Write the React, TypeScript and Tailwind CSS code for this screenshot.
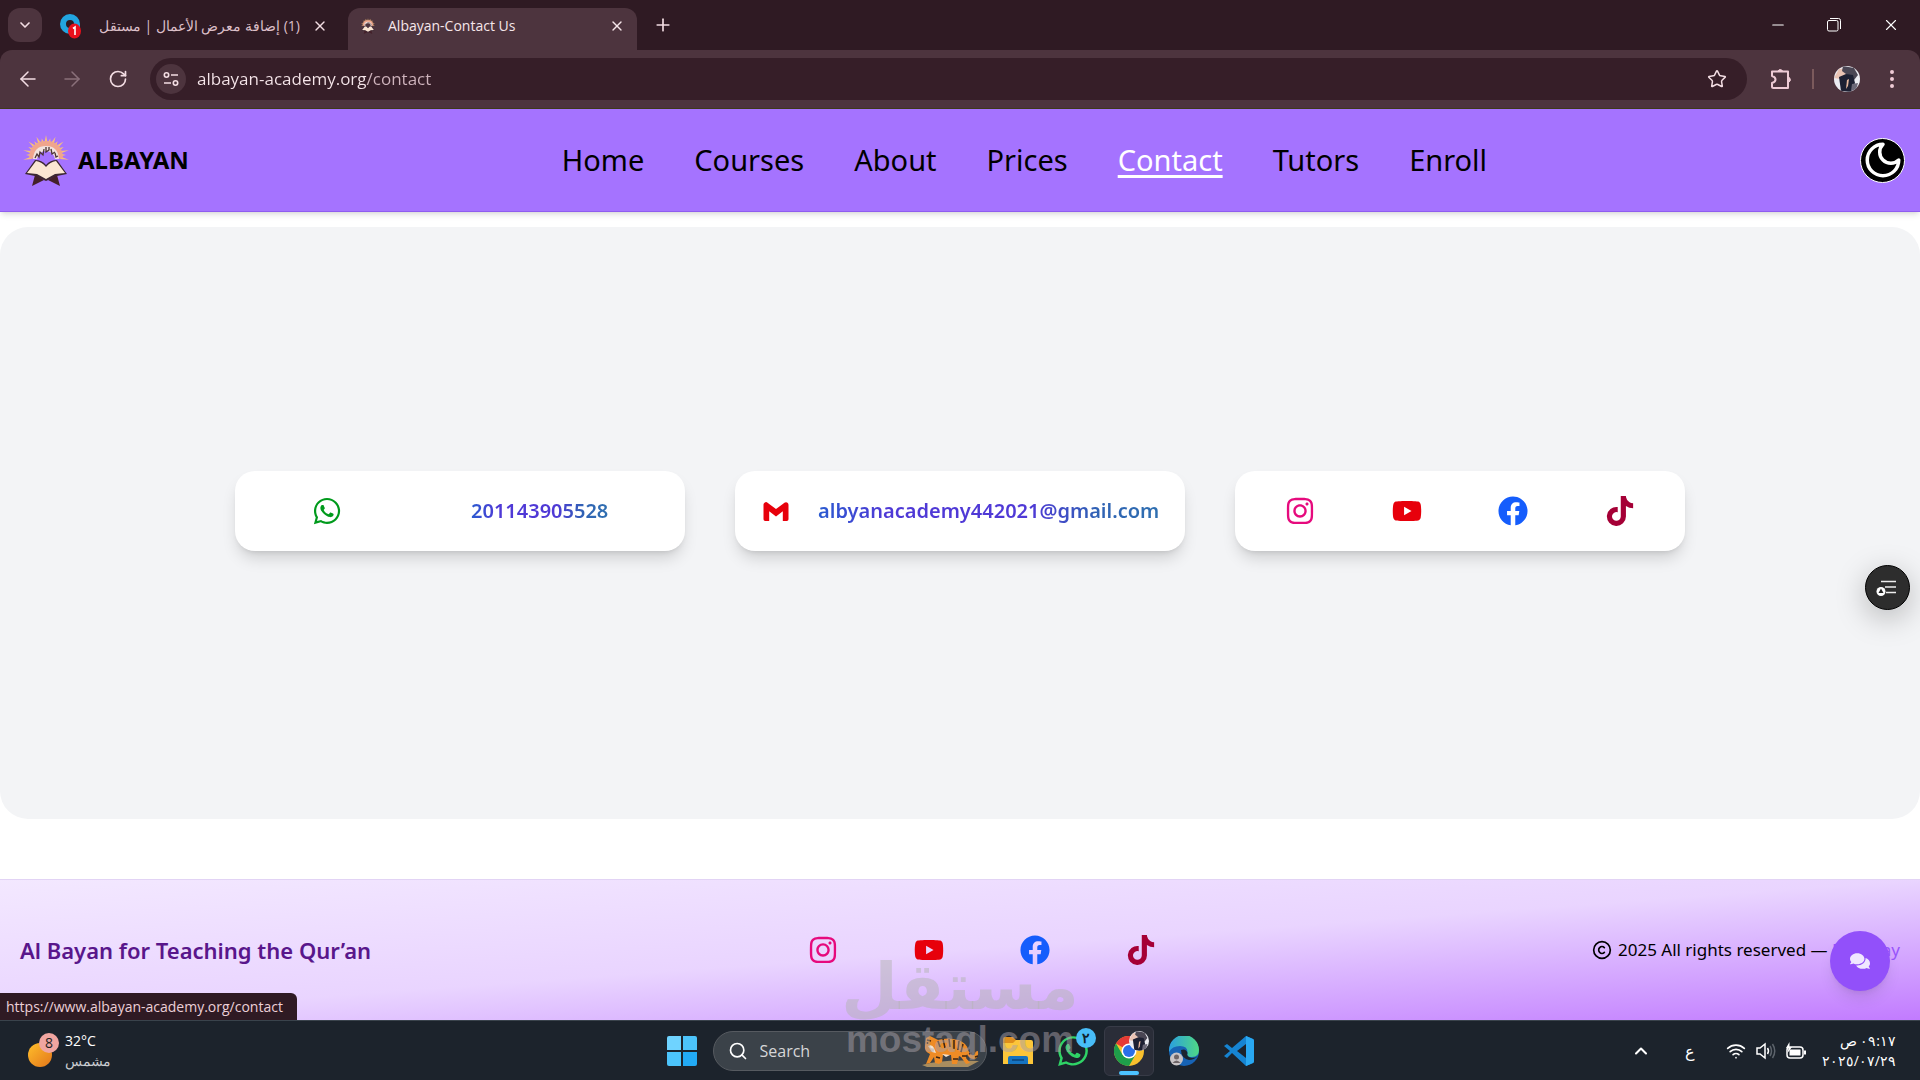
import type { ReactNode } from 'react';
import { FaComments, FaFacebook, FaInstagram, FaTiktok, FaWhatsapp, FaYoutube } from 'react-icons/fa';
import { BiLogoGmail } from 'react-icons/bi';
import { ArrowLeft, ArrowRight, ChevronDown, ChevronUp, Copyright, EllipsisVertical, Minus, Plus, RotateCw, Search, Star, Wifi, X } from 'lucide-react';

const rayPath = [-104, -90, -76, -62, -48, -36, -24, -12, 0, 12, 24, 36, 48, 62, 76, 90, 104]
  .map((deg, i) => {
    const at = (d: number, rx: number, ry: number) => {
      const r = (d * Math.PI) / 180;
      return `${(24 + rx * Math.sin(r)).toFixed(1)} ${(21 - ry * Math.cos(r)).toFixed(1)}`;
    };
    const long = i % 2 === 0;
    return `M${at(deg - 6, 15, 12)} L${at(deg, long ? 23.5 : 20, long ? 20 : 17)} L${at(deg + 6, 15, 12)} Z`;
  })
  .join(' ');

function Logo({ className }: { className: string }) {
  return (
    <svg viewBox="0 0 48 52" className={className} aria-hidden="true">
      <path d={rayPath} fill="#f6c07c" />
      <path d="M7 24 Q8 7 24 7 Q40 7 41 24 L35 25 Q34 14 24 14 Q14 14 13 25 Z" fill="#f0a58c" />
      <path d="M11 25 Q12 12 24 12 Q36 12 37 25 L33 25 Q31 17 24 17 Q17 17 15 25 Z" fill="#f1e2de" />
      <path d="M13 24 l2 -4 l2 3 l1 -5 l3 3 l1 -6 M24 13 v5 l3 -2 v-3 M29 15 l1 5 l3 -2 M33 19 l1 4 l2 -1" fill="none" stroke="#4b3434" strokeWidth="1.300" />
      <path d="M3 40 L13 26 Q20 26 24 31 Q28 26 35 26 L45 40 L35 42 L24 47 L13 42 Z" fill="#3c2733" />
      <path d="M5 39 L14 27 Q20 28 24 33 Q28 28 34 27 L43 39 L33 40 L24 45 L15 40 Z" fill="#fbe6d3" />
      <path d="M13 41 L22 46 L10 52 Z M35 41 L26 46 L38 52 Z" fill="#432029" />
    </svg>
  );
}

function MoonIcon() {
  return (
    <svg viewBox="0 0 24 24" className="size-[42px]" fill="none" stroke="currentColor" strokeWidth="2" strokeLinecap="round" strokeLinejoin="round" aria-hidden="true">
      <path d="M12 3a6 6 0 0 0 9 9 9 9 0 1 1-9-9Z" />
    </svg>
  );
}

function Avatar({ className }: { className: string }) {
  return (
    <svg viewBox="0 0 26 26" className={className} aria-hidden="true">
      <clipPath id="avatar-clip"><circle cx="13" cy="13" r="13" /></clipPath>
      <g clipPath="url(#avatar-clip)">
        <rect width="26" height="26" fill="#ececf2" />
        <path d="M0 12 L5 3 L14 2 L13 9 L6 13 Z" fill="#e9c3b4" />
        <path d="M9 0 L20 2 L24 9 L20 14 L12 8 L8 5 Z" fill="#4a4654" />
        <path d="M5 11 L12 8 L19 9 L21 17 L17 26 L7 25 Z" fill="#1d2033" />
        <path d="M13 14 L15 13 L14 20 L12 23 Z" fill="#e8b9a0" />
        <path d="M18 18 L24 17 L22 24 L17 25 Z" fill="#6b6878" />
      </g>
    </svg>
  );
}

function BrowserTop() {
  return (
    <div className="bg-[#2f1a23] font-['Open_Sans','Noto_Sans',sans-serif] text-[#f3dde3]">
      <div className="flex h-[50px] items-end pl-2">
        <button aria-label="Search tabs" className="mb-2 flex size-[34px] items-center justify-center rounded-xl bg-[#4d343e]">
          <ChevronDown className="size-4" strokeWidth={2.5} />
        </button>
        <div className="flex h-[42px] w-[306px] items-center gap-3 pr-5 pb-1.5 pl-[18px]">
          <svg viewBox="0 0 22 28" className="h-7 w-[22px] shrink-0" aria-hidden="true">
            <circle cx="10" cy="12" r="7" fill="none" stroke="#22a5e0" strokeWidth="6" />
            <path d="M10 21 L20 21 L20 12 Z" fill="#22a5e0" />
            <ellipse cx="14.500" cy="19" rx="6.500" ry="7.500" fill="#e8101c" />
            <path d="M13 16.500 L15 15 V23" fill="none" stroke="#fff" strokeWidth="1.600" />
          </svg>
          <span dir="rtl" className="flex-1 overflow-hidden text-sm whitespace-nowrap text-[#dcbfc8]">(1) إضافة معرض الأعمال | مستقل</span>
          <button aria-label="Close tab"><X className="size-4" /></button>
        </div>
        <div className="flex h-[42px] w-[289px] items-center gap-3 rounded-t-xl bg-[#4d343e] px-3 pb-1.5 text-[#f6e6ea]">
          <Logo className="h-4 w-4" />
          <span className="flex-1 text-sm whitespace-nowrap">Albayan-Contact Us</span>
          <button aria-label="Close tab"><X className="size-4" /></button>
        </div>
        <button aria-label="New tab" className="mb-[15px] ml-4"><Plus className="size-5" /></button>
        <div className="ml-auto flex h-[50px] items-center text-white">
          <button aria-label="Minimize" className="flex w-14 justify-center"><Minus className="size-[18px]" strokeWidth={1.5} /></button>
          <button aria-label="Restore" className="flex w-14 justify-center">
            <svg viewBox="0 0 14 14" className="size-3.5" fill="none" stroke="currentColor" aria-hidden="true"><rect x="0.500" y="2.500" width="10.500" height="10.500" rx="1.500" /><path d="M3 0.500 H11.500 Q13.500 0.500 13.500 2.500 V11" /></svg>
          </button>
          <button aria-label="Close" className="flex w-[58px] justify-center"><X className="size-[18px]" strokeWidth={1.5} /></button>
        </div>
      </div>
      <div className="flex h-[59px] items-center rounded-t-xl border-b border-[#3f3a1c] bg-[#4d343e] px-4">
        <button aria-label="Back" className="mr-5"><ArrowLeft className="size-6" strokeWidth={1.5} /></button>
        <button aria-label="Forward" className="mr-6 text-[#8a707a]"><ArrowRight className="size-6" strokeWidth={1.5} /></button>
        <button aria-label="Reload" className="mr-[22px]"><RotateCw className="size-5" strokeWidth={2} /></button>
        <div className="flex h-[42px] flex-1 items-center rounded-full bg-[#361e28] pr-5 pl-1.5">
          <button aria-label="Site information" className="mr-[11px] flex size-[30px] items-center justify-center rounded-full bg-[#4d343e]">
            <svg viewBox="0 0 16 16" className="size-4" fill="none" stroke="currentColor" strokeWidth="1.600" aria-hidden="true"><circle cx="3.500" cy="4" r="2.200" /><path d="M8 4 H15 M1 12 H8" /><circle cx="12.500" cy="12" r="2.200" /></svg>
          </button>
          <input aria-label="Address" defaultValue="albayan-academy.org/contact" className="flex-1 bg-[linear-gradient(90deg,#f6e6ea_170px,#cfb4bd_170px)] bg-clip-text text-[17px] text-transparent outline-none" />
          <button aria-label="Bookmark"><Star className="size-5" strokeWidth={1.8} /></button>
        </div>
        <button aria-label="Extensions" className="ml-[23px] text-[#efcbd5]">
          <svg viewBox="0 0 22 22" className="size-[22px]" fill="none" stroke="currentColor" strokeWidth="2" strokeLinejoin="round" aria-hidden="true"><path d="M2 3.500 H18 V20 H3.500 Q2 20 2 18.500 V15 Q5.500 14 5.500 11.500 Q5.500 9 2 8 Z" /><path d="M8 3 A2.500 2.500 0 0 1 12.500 3 Z M19 9.500 A2.500 2.500 0 0 1 19 14 Z" fill="currentColor" strokeWidth="1" /></svg>
        </button>
        <span className="mx-5 h-5 w-0.5 bg-[#7b5a5c]" />
        <Avatar className="size-[26px]" />
        <button aria-label="Menu" className="ml-5 text-[#efcbd5]"><EllipsisVertical className="size-6" /></button>
      </div>
    </div>
  );
}

const navItems = ['Home', 'Courses', 'About', 'Prices', 'Contact', 'Tutors', 'Enroll'];

function SiteHeader() {
  return (
    <header className="relative flex h-[103px] items-center justify-between border-b border-[#8f5cf0] bg-[#a573ff] pr-[15px] pl-[22px] shadow-md">
      <a href="#home" className="flex items-center gap-2">
        <Logo className="h-[52px] w-12" />
        <span className="text-2xl font-bold text-black">ALBAYAN</span>
      </a>
      <nav className="flex gap-[50px] text-[29px] text-black">
        {navItems.map((item) => (
          <a key={item} href={`#${item.toLowerCase()}`} className={item === 'Contact' ? 'text-white underline decoration-3 underline-offset-4' : ''}>{item}</a>
        ))}
      </nav>
      <button aria-label="Dark mode" className="flex size-[45px] items-center justify-center rounded-full border border-white bg-black text-white"><MoonIcon /></button>
    </header>
  );
}

function Card({ children }: { children: ReactNode }) {
  return (
    <div className="flex h-20 flex-1 items-center justify-around rounded-[20px] bg-white px-3 shadow-[0_10px_16px_-3px_rgba(0,0,0,0.15),0_4px_6px_-4px_rgba(0,0,0,0.15)]">{children}</div>
  );
}

function SocialLinks() {
  return (
    <>
      <a href="#instagram" aria-label="Instagram"><FaInstagram className="size-[30px] text-[#e60a7d]" /></a>
      <a href="#youtube" aria-label="YouTube"><FaYoutube className="size-[30px] text-[#e7000b]" /></a>
      <a href="#facebook" aria-label="Facebook"><FaFacebook className="size-[30px] text-[#155dfc]" /></a>
      <a href="#tiktok" aria-label="TikTok"><FaTiktok className="size-[30px] text-[#a50036]" /></a>
    </>
  );
}

const contactText = 'bg-[linear-gradient(90deg,#2a5bd0_0%,#4f39d6_20%,#4f39d6_62%,#2f62b4_82%,#2f6fb0_100%)] bg-clip-text text-xl font-semibold text-transparent';

function SiteMain() {
  return (
    <main className="flex flex-1 flex-col bg-white pt-[15px] pb-[60px]">
      <section className="relative flex flex-1 items-center justify-center rounded-[28px] bg-[#f3f4f6] px-[235px] pb-6">
        <div className="flex flex-1 gap-[50px]">
          <Card>
            <FaWhatsapp className="size-[30px] text-[#009a1c]" />
            <a href="tel:201143905528" className={contactText}>201143905528</a>
          </Card>
          <Card>
            <BiLogoGmail className="size-[30px] text-[#e7000b]" />
            <a href="mailto:albyanacademy442021@gmail.com" className={contactText}>albyanacademy442021@gmail.com</a>
          </Card>
          <Card><SocialLinks /></Card>
        </div>
        <button aria-label="Reading list" className="absolute top-[338px] right-2.5 flex size-[45px] items-center justify-center rounded-full border border-black bg-[#2d2d2d] shadow-[0_8px_30px_rgba(0,0,0,0.25)]">
          <svg viewBox="0 0 22 18" className="mr-1 h-[18px] w-[22px]" aria-hidden="true"><path d="M6 2.500 H21 M10 8 H21 M11 13.500 H21" stroke="#eee" strokeWidth="1.600" /><circle cx="6" cy="12.500" r="4.500" fill="#fff" /><path d="M6 9.500 L8.500 14 H3.500 Z" fill="#222" /></svg>
        </button>
      </section>
    </main>
  );
}

function SiteFooter() {
  return (
    <footer className="relative flex h-[141px] items-center justify-between border-t border-[#e2d3f5] bg-gradient-to-br from-purple-100 via-purple-200 to-purple-400 px-5">
      <p className="text-[22px] font-semibold text-[#59168b]">Al Bayan for Teaching the Qur’an</p>
      <div className="flex w-[424px] justify-around"><SocialLinks /></div>
      <p className="flex items-center gap-1.5 text-[17px] text-black">
        <Copyright className="size-5" />
        <span>2025 All rights reserved — <a href="#author" className="text-[#9855fb]">Elmenay</a></span>
      </p>
      <button aria-label="Chat" className="absolute right-[30px] bottom-[29px] flex size-[60px] items-center justify-center rounded-full bg-[#9250fa] text-[#f0e8ff] shadow-lg"><FaComments className="size-5" /></button>
      <div className="absolute bottom-0 left-0 flex h-[27px] items-center rounded-tr-md bg-[#2f1a23] pr-3.5 pl-1.5 font-['Open_Sans',sans-serif] text-sm text-[#ecd0d8]">https://www.albayan-academy.org/contact</div>
    </footer>
  );
}

function Tiger() {
  return (
    <svg viewBox="0 0 58 34" className="h-[34px] w-[58px]" aria-hidden="true">
      <path d="M0 31 Q20 25 57 27 L46 33 H5 Z" fill="#a98d5f" />
      <path d="M4 4 L8 2 L12 4 L16 6 Q26 3 36 6 Q45 9 46 16 Q50 24 53 20 Q53 17 56 17 Q57 24 52 25 Q47 25 45 20 L44 24 L48 29 L44 30 L39 23 L37 22 L35 30 H30 L29 21 L21 21 L20 28 L17 30 L13 29 L12 23 L8 29 L4 30 L8 20 Q2 17 3 12 Z" fill="#ee8b25" />
      <path d="M6 12 Q10 10 12 14 L14 19 L10 18 Z M20 20 L28 21 L24 23 Z" fill="#f7e3cf" />
      <path d="M16 7 L18 13 M21 5 L23 14 M27 5 L28 13 M32 6 L32 15 M37 7 L36 16 M41 10 L39 18 M14 23 L18 24 M31 25 L36 25 M40 22 L45 22 M5 6 L9 7 M47 20 L50 19 M53 23 L56 22" stroke="#3b2312" strokeWidth="1.500" fill="none" />
      <circle cx="5.500" cy="9" r="0.900" fill="#221008" />
    </svg>
  );
}

function ChromeIcon() {
  return (
    <svg viewBox="0 0 30 30" className="size-[30px]" aria-hidden="true">
      <circle cx="15" cy="15" r="15" fill="#f9c02d" />
      <path d="M15 15 L2 7.500 A15 15 0 0 1 28 7.500 H15 Z" fill="#e53935" />
      <path d="M2 7.500 A15 15 0 0 0 15 30 L21.500 18.800 L15 15 L8.500 18.800 Z" fill="#1e9e4a" />
      <circle cx="15" cy="15" r="7.500" fill="#fff" />
      <circle cx="15" cy="15" r="6" fill="#2a6fe8" />
    </svg>
  );
}

function EdgeIcon() {
  return (
    <svg viewBox="0 0 30 30" className="size-[30px]" aria-hidden="true">
      <defs>
        <linearGradient id="edge-top" x1="0" x2="1"><stop offset="0" stopColor="#2a9fe0" /><stop offset="1" stopColor="#4fd884" /></linearGradient>
      </defs>
      <circle cx="15" cy="15" r="15" fill="#1763b5" />
      <path d="M0 14 A15 15 0 0 1 30 14 Q30 21 23 21 Q17 21 18.500 17 Q19 10 11 10 Q3 10 0 16 Z" fill="url(#edge-top)" />
      <path d="M12 14 Q17 12 18.500 17 Q17 21 23 22 Q27 22 29 20 Q25 24 20 24 Q12 22 12 14 Z" fill="#1c2530" />
      <circle cx="7.500" cy="23" r="6.500" fill="#c9c4c6" />
      <circle cx="7.500" cy="21" r="2.500" fill="#6e6568" /><path d="M3.500 27 Q7.500 22 11.500 27 Z" fill="#6e6568" />
    </svg>
  );
}

function Taskbar() {
  return (
    <div className="grid h-[60px] grid-cols-[1fr_auto_1fr] items-center border-t border-[#3a434c] bg-[#1c232c] px-6 font-['Open_Sans','Noto_Sans',sans-serif] text-white">
      <div className="flex items-center gap-1.5 pl-1">
        <svg viewBox="0 0 31 35" className="h-[35px] w-[31px]" aria-hidden="true">
          <defs><linearGradient id="sun" x1="0" y1="0" x2="1" y2="1"><stop offset="0" stopColor="#ffbf2b" /><stop offset="1" stopColor="#e3761b" /></linearGradient></defs>
          <circle cx="12" cy="22" r="12" fill="url(#sun)" /><circle cx="21" cy="10" r="10" fill="#f0a5a0" />
          <text x="21" y="15" textAnchor="middle" fontSize="14" fill="#222">8</text>
        </svg>
        <div className="text-sm leading-5"><p>32°C</p><p className="text-[#c8cbd0]">مشمس</p></div>
      </div>
      <div className="flex items-center">
        <button aria-label="Start" className="grid size-[30px] grid-cols-2 gap-0.5">
          <span className="rounded-tl-xs bg-[#6fd3ff]" /><span className="rounded-tr-xs bg-[#4cc4fb]" /><span className="rounded-bl-xs bg-[#4cc4fb]" /><span className="rounded-br-xs bg-[#22aaf5]" />
        </button>
        <label className="ml-4 flex h-10 w-[274px] items-center gap-3 rounded-full border border-[#565a60] bg-[#3b4249] pr-1.5 pl-3.5">
          <Search className="size-5" />
          <input aria-label="Search" placeholder="Search" className="w-0 flex-1 bg-transparent text-base placeholder:text-[#d6d6d8]" />
          <Tiger />
        </label>
        <button aria-label="File Explorer" className="ml-4">
          <svg viewBox="0 0 30 28" className="h-7 w-[30px]" aria-hidden="true"><path d="M0 2 Q0 0 2 0 H10 L13 3 H28 V10 H0 Z" fill="#e08f1c" /><path d="M0 6 H10 L13 3 H28 Q30 3 30 5 V27 H0 Z" fill="#fcc63a" /><path d="M5 27 V21 Q5 19 7 19 H23 Q25 19 25 21 V27 Z" fill="#1673c0" /><path d="M9 23 H21" stroke="#0d4f8c" strokeWidth="2" /></svg>
        </button>
        <button aria-label="WhatsApp" className="relative ml-[23px]">
          <FaWhatsapp className="size-[34px] text-[#2fd366]" />
          <span className="absolute -top-1.5 -right-1.5 flex size-5 items-center justify-center rounded-full bg-[#48bdf8] text-sm font-semibold text-[#10202c]">٢</span>
        </button>
        <button aria-label="Chrome" className="relative ml-3.5 flex size-[50px] items-center justify-center rounded-md border border-[#383b47] bg-[#2a2d38]">
          <ChromeIcon />
          <Avatar className="absolute top-1 right-1 size-5" />
          <span className="absolute bottom-0 h-1 w-5 rounded-full bg-[#4cc2ff]" />
        </button>
        <button aria-label="Edge" className="ml-[15px]"><EdgeIcon /></button>
        <button aria-label="Visual Studio Code" className="ml-[25px]">
          <svg viewBox="0 0 30 30" className="size-[30px]" aria-hidden="true"><path d="M22 0 L29 3 Q30 3.500 30 5 V25 Q30 26.500 29 27 L22 30 L8 17 L3 22 L0 20 L6 15 L0 10 L3 8 L8 12 Z" fill="#1684d2" /><path d="M22 0 L29 3 Q30 3.500 30 5 V25 Q30 26.500 29 27 L22 30 Z" fill="#29a8f2" /><path d="M22 8 V22 L13 15 Z" fill="#1c232c" /></svg>
        </button>
      </div>
      <div className="flex items-center justify-end">
        <button aria-label="Hidden icons"><ChevronUp className="size-5" strokeWidth={2.5} /></button>
        <span className="ml-[34px] text-base">ع</span>
        <Wifi className="ml-[31px] size-5" />
        <svg viewBox="0 0 20 18" className="ml-2.5 h-[18px] w-5" fill="none" stroke="#fff" strokeWidth="1.500" aria-hidden="true"><path d="M1 6 H4 L9 2 V16 L4 12 H1 Z M11.500 6 Q13.500 9 11.500 12" /><path d="M14 4 Q17 9 14 14 M16.500 2 Q21 9 16.500 16" stroke="#5c636b" /></svg>
        <svg viewBox="0 0 20 18" className="ml-2.5 h-[18px] w-5" aria-hidden="true"><rect x="1" y="5" width="16" height="11" rx="3" fill="none" stroke="#fff" strokeWidth="1.500" /><rect x="3.500" y="7.500" width="11" height="6" fill="#fff" /><path d="M18 8.500 V12.500 H20 V8.500 Z M3.500 0 L0 6 H2.500 L1.500 11 L6 5 H3.500 Z" fill="#fff" /></svg>
        <div dir="rtl" className="ml-4 text-sm leading-5"><p>٠٩:١٧ ص</p><p>٢٠٢٥/٠٧/٢٩</p></div>
      </div>
    </div>
  );
}

function Watermark() {
  return (
    <div aria-hidden="true" className="pointer-events-none absolute bottom-5 left-1/2 flex -translate-x-1/2 flex-col items-center font-bold text-[#b4b4b4]/50">
      <span className="font-['DejaVu_Sans',sans-serif] text-[65px] leading-[66px]">مستقل</span>
      <span className="font-['Liberation_Sans',sans-serif] text-[37px] leading-10 text-[#a8a0a8]/50">mostaql.com</span>
    </div>
  );
}

export default function App() {
  return (
    <div className="relative flex min-h-screen flex-col overflow-hidden bg-white font-['Noto_Sans',sans-serif]">
      <BrowserTop />
      <SiteHeader />
      <SiteMain />
      <SiteFooter />
      <Taskbar />
      <Watermark />
    </div>
  );
}
